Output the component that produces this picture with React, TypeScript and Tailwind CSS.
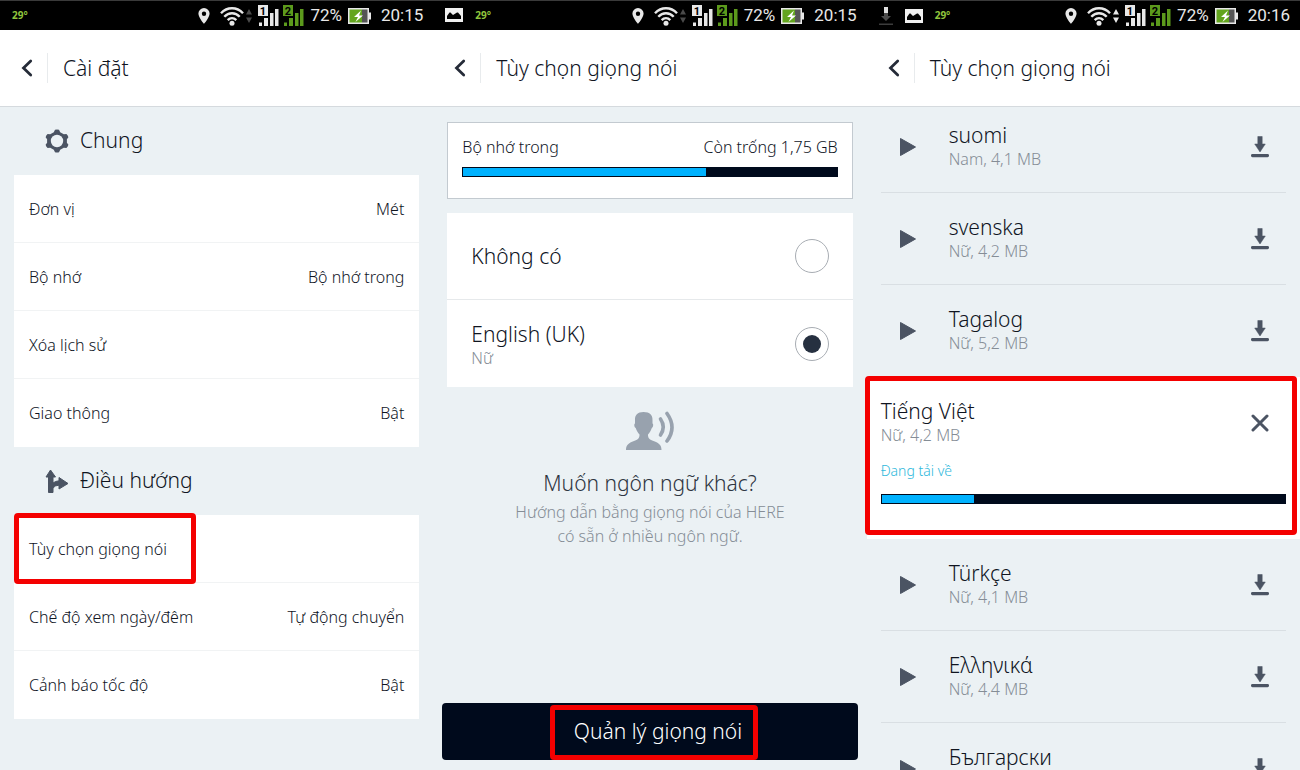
import { useState, type ReactNode } from "react";

const PinIcon = () => (
  <svg className="h-[18px] w-3" viewBox="0 0 12 18" fill="#e8e8e8" aria-hidden="true">
    <path
      fillRule="evenodd"
      d="M6 1a5.6 5.6 0 0 0-5.6 5.6C.4 10.6 6 17 6 17s5.600-6.400 5.600-10.400A5.600 5.600 0 0 0 6 1Zm0 3.500a2.200 2.200 0 1 1 0 4.400a2.200 2.200 0 0 1 0-4.400Z"
    />
  </svg>
);

const WifiIcon = () => (
  <svg className="h-5 w-6" viewBox="0 0 24 20" fill="none" stroke="#e8e8e8" strokeWidth="2.400" aria-hidden="true">
    <path d="M1 7.200C7.200.6 16.800.6 23 7.200" />
    <path d="M4.300 10.700c4.400-4.700 11-4.700 15.400 0" />
    <path d="M7.700 14.100c2.500-2.600 6.100-2.600 8.600 0" />
    <circle cx="12" cy="17.200" r="2.500" fill="#e8e8e8" stroke="none" />
  </svg>
);

const TrafficIcon = ({ active }: { active: boolean }) => (
  <svg className="h-4 w-1.5" viewBox="0 0 6 16" fill={active ? "#e8e8e8" : "#4a4a4a"} aria-hidden="true">
    <path d="M3 1l3 5.500H0ZM3 15l3-5.500H0Z" />
  </svg>
);

const SignalIcon = ({ sim, color }: { sim: string; color: string }) => (
  <svg className="h-[22px] w-[21px]" viewBox="0 0 21 22" fill={color} aria-hidden="true">
    <rect x="0" y="0" width="10" height="11" />
    <text x="5" y="9.500" fontSize="11" fontWeight="700" textAnchor="middle" fill="#000000" fontFamily="Roboto, sans-serif">
      {sim}
    </text>
    <rect x="1" y="17.500" width="3" height="3.500" />
    <rect x="6" y="13" width="4" height="8" />
    <rect x="12" y="8" width="3.500" height="13" />
    <rect x="17" y="4" width="3.500" height="17" />
  </svg>
);

const BatteryIcon = () => (
  <svg className="h-4 w-[23px]" viewBox="0 0 23 16" aria-hidden="true">
    <rect x="0" y="0" width="21" height="16" fill="#e8e8e8" />
    <rect x="21" y="4.500" width="2" height="7" fill="#e8e8e8" />
    <rect x="1.500" y="1.500" width="12.500" height="13" fill="#63a51e" />
    <rect x="14" y="1.500" width="5.500" height="13" fill="#555555" />
    <path d="M13 2.500L6 9h4l-2.500 5L15 7.500h-4Z" fill="#ffffff" />
  </svg>
);

const ImageIcon = () => (
  <svg className="h-[14px] w-[18px]" viewBox="0 0 18 14" aria-hidden="true">
    <rect width="18" height="14" fill="#f0f0f0" />
    <path d="M2 11V8l2.500-3.500h1L8 7l4-2.500h1L16 8v3Z" fill="#000000" />
  </svg>
);

const StatusDownloadIcon = () => (
  <svg className="h-[18px] w-[14px]" viewBox="0 0 14 18" aria-hidden="true">
    <path d="M5 0h4v6H5Z" fill="#e0e0e0" />
    <path d="M5 6h4v3h3l-5 5-5-5h3Z" fill="#4c4c4c" />
    <rect y="16.500" width="14" height="1.500" fill="#3c3c3c" />
  </svg>
);

const BackIcon = () => (
  <svg className="h-[18px] w-3" viewBox="0 0 12 18" fill="none" stroke="#252b38" strokeWidth="2.800" strokeLinecap="round" aria-hidden="true">
    <path d="M9.700 2L2.500 9l7.200 7" />
  </svg>
);

const GearIcon = () => (
  <svg className="h-6 w-6" viewBox="0 0 24 24" aria-hidden="true">
    <g fill="#4b5463">
      <path d="M10 .8Q12 .2 14 .8L15.200 3.300 18.800 5.200 21.400 5Q23 6.400 23.400 8.300L21.900 10.300V13.700L23.400 15.700Q23 17.600 21.400 19L18.800 18.800 15.200 20.700 14 23.200Q12 23.800 10 23.200L8.800 20.700 5.200 18.800 2.600 19Q1 17.600.6 15.700L2.100 13.700V10.300L.6 8.300Q1 6.400 2.600 5L5.200 5.200 8.800 3.300Z" />
    </g>
    <circle cx="12" cy="12" r="6.200" fill="#ebf1f4" />
  </svg>
);

const RouteIcon = () => (
  <svg className="h-6 w-6" viewBox="0 0 24 24" fill="#4b5463" stroke="#4b5463" strokeWidth="1" strokeLinejoin="round" aria-hidden="true">
    <path d="M5.500 1L10.500 8H8v6q2.500-2 6-2.200V8.500L23 14.500 14 20v-3.800Q10 16.200 8 19v4.500H3.500V8H1Z" />
  </svg>
);

const SpeakerIcon = () => (
  <svg className="h-10 w-12" viewBox="0 0 48 40" fill="#98a2ae" aria-hidden="true">
    <path d="M17.500 1c-6 0-8.800 3-8.500 8.500v3c-1 0-1 3.500.7 4.500 1 3 2.300 5 3.800 6.500.2 4-2 5.200-5.500 6.500C2.500 32 0 34 0 39h35.500c0-5-2.500-7-8-9-3.500-1.300-5.700-2.500-5.500-6.500 1.500-1.500 2.800-3.500 3.800-6.500 1.700-1 1.700-4.500.7-4.500v-3C26.800 4 24 1 17.500 1Z" />
    <path d="M34.500 8q5.500 8 0 16" fill="none" stroke="#98a2ae" strokeWidth="3.600" strokeLinecap="round" />
    <path d="M41 2.500q10 14 0 27.500" fill="none" stroke="#98a2ae" strokeWidth="3.600" strokeLinecap="round" />
  </svg>
);

const PlayIcon = () => (
  <svg className="h-5 w-[18px]" viewBox="0 0 18 20" fill="#4b5463" stroke="#4b5463" strokeWidth="1" strokeLinejoin="round" aria-hidden="true">
    <path d="M1.500 1.500L16.500 10 1.500 18.500Z" />
  </svg>
);

const DownloadIcon = () => (
  <svg className="h-[22px] w-[18px]" viewBox="0 0 18 22" fill="#4b5463" aria-hidden="true">
    <path d="M6.800.5h4.400V8h3.100L9 16 3.700 8h3.100Z" stroke="#4b5463" strokeWidth=".5" strokeLinejoin="round" />
    <rect x="0" y="18" width="18" height="3.200" rx="1.400" />
  </svg>
);

const CloseIcon = () => (
  <svg className="size-[18px]" viewBox="0 0 18 18" stroke="#4b5463" strokeWidth="3" strokeLinecap="round" aria-hidden="true">
    <path d="M2 2l14 14M16 2L2 16" />
  </svg>
);

type PhoneProps = {
  title: string;
  time: string;
  notices?: ReactNode;
  active?: boolean;
  children: ReactNode;
};

function Phone({ title, time, notices, active = false, children }: PhoneProps) {
  return (
    <section className="flex min-h-0 min-w-0 flex-col">
      <div className="flex h-[30px] shrink-0 items-center justify-between border-t border-[#3a3a3a] bg-black pr-2.5 pl-3 font-[Roboto,sans-serif] text-lg font-normal text-[#e8e8e8]">
        <div className="flex items-center gap-3">
          {notices}
          <span className="font-['Noto_Sans',sans-serif] text-[10px] font-bold text-[#8fc43c]">29°</span>
        </div>
        <div className="flex items-center">
          <PinIcon />
          <span className="ml-2.5 flex items-center gap-0.5">
            <WifiIcon />
            <TrafficIcon active={active} />
          </span>
          <span className="mr-1.5 ml-1.5 flex gap-1">
            <SignalIcon sim="1" color="#e8e8e8" />
            <SignalIcon sim="2" color="#5c9a1c" />
          </span>
          <span className="text-[17px]">72%</span>
          <span className="mr-2.5 ml-1.5">
            <BatteryIcon />
          </span>
          <span className="text-[17px]">{time}</span>
        </div>
      </div>
      <header className="flex h-[77px] shrink-0 items-center border-b border-[#d5dade] bg-white pl-[21px]">
        <button type="button" aria-label="Quay lại" className="mr-3.5">
          <BackIcon />
        </button>
        <h1 className="border-l border-[#e8ebed] pl-[15px] text-[21px] leading-[30px]">{title}</h1>
      </header>
      {children}
    </section>
  );
}

type Setting = { label: string; value?: string; marked?: boolean };

const general: Setting[] = [
  { label: "Đơn vị", value: "Mét" },
  { label: "Bộ nhớ", value: "Bộ nhớ trong" },
  { label: "Xóa lịch sử" },
  { label: "Giao thông", value: "Bật" },
];

const navigation: Setting[] = [
  { label: "Tùy chọn giọng nói", marked: true },
  { label: "Chế độ xem ngày/đêm", value: "Tự động chuyển" },
  { label: "Cảnh báo tốc độ", value: "Bật" },
];

function SettingsGroup({ icon, title, items }: { icon: ReactNode; title: string; items: Setting[] }) {
  return (
    <section>
      <h2 className="flex h-[68px] items-center gap-[11px] pl-[31px] text-[21px]">
        {icon}
        {title}
      </h2>
      <ul className="divide-y divide-[#f1f3f4] bg-white text-base font-[350]">
        {items.map((item) => (
          <li key={item.label} className="relative h-[68px]">
            <button type="button" className="flex h-full w-full items-center justify-between px-[15px]">
              <span>{item.label}</span>
              <span>{item.value}</span>
            </button>
            {item.marked && (
              <span className="pointer-events-none absolute -top-0.5 -bottom-0.5 left-0 w-[182px] rounded-sm border-5 border-[#f40000]" />
            )}
          </li>
        ))}
      </ul>
    </section>
  );
}

function ProgressBar({ value, label }: { value: number; label: string }) {
  return (
    <div
      role="progressbar"
      aria-label={label}
      aria-valuenow={value}
      aria-valuemin={0}
      aria-valuemax={100}
      className="h-2.5 border border-[#000a1c] bg-[#000a1c]"
    >
      <div className="h-full bg-[#00b2ff]" style={{ width: `${value}%` }} />
    </div>
  );
}

const voices = [
  { name: "Không có", detail: "" },
  { name: "English (UK)", detail: "Nữ" },
];

function VoiceOptions() {
  const [selected, setSelected] = useState("English (UK)");
  return (
    <main className="flex min-h-0 flex-1 flex-col pt-[15px]">
      <section className="mx-3.5 h-[77px] shrink-0 border border-[#c3cad0] bg-white px-3.5 pt-3">
        <div className="mb-2 flex justify-between text-base leading-6 font-[350]">
          <span>Bộ nhớ trong</span>
          <span>Còn trống 1,75 GB</span>
        </div>
        <ProgressBar value={65} label="Bộ nhớ trong" />
      </section>
      <div className="mx-3.5 mt-3.5 divide-y divide-[#e6e9eb] bg-white">
        {voices.map((voice) => (
          <label key={voice.name} className="flex h-[87px] items-center justify-between px-6">
            <span className="flex flex-col">
              <span className="text-[21px] leading-7">{voice.name}</span>
              {voice.detail && <span className="text-base leading-5 font-[350] text-[#858d96]">{voice.detail}</span>}
            </span>
            <input
              type="radio"
              name="voice"
              checked={selected === voice.name}
              onChange={() => setSelected(voice.name)}
              className="size-[34px] appearance-none rounded-full border border-[#a8adb3] bg-clip-content p-[7px] checked:bg-[#263040]"
            />
          </label>
        ))}
      </div>
      <section className="mt-6 flex flex-col items-center text-center">
        <SpeakerIcon />
        <h2 className="mt-[17px] text-[21px] leading-[30px] text-[#2e3541]">Muốn ngôn ngữ khác?</h2>
        <p className="mt-0.5 text-base leading-6 font-[350] text-[#858d96]">
          Hướng dẫn bằng giọng nói của HERE
          <br />
          có sẵn ở nhiều ngôn ngữ.
        </p>
      </section>
      <button type="button" className="relative mx-[9px] mt-auto mb-2.5 flex h-[57px] shrink-0 items-center justify-center rounded-sm bg-[#000a1c] text-[21px] text-white">
        <span className="pl-4">Quản lý giọng nói</span>
        <span className="pointer-events-none absolute top-0.5 bottom-0 left-[108px] w-[208px] rounded-sm border-5 border-[#f40000]" />
      </button>
    </main>
  );
}

type Pack = { name: string; detail: string; progress?: number };

const packs: Pack[] = [
  { name: "suomi", detail: "Nam, 4,1 MB" },
  { name: "svenska", detail: "Nữ, 4,2 MB" },
  { name: "Tagalog", detail: "Nữ, 5,2 MB" },
  { name: "Tiếng Việt", detail: "Nữ, 4,2 MB", progress: 23 },
  { name: "Türkçe", detail: "Nữ, 4,1 MB" },
  { name: "Ελληνικά", detail: "Nữ, 4,4 MB" },
  { name: "Български", detail: "" },
];

function PackText({ pack }: { pack: Pack }) {
  return (
    <div className="min-h-[52px] flex-1 pb-1">
      <h2 className="text-[21px] leading-7">{pack.name}</h2>
      <p className="text-base leading-5 font-[350] text-[#858d96]">{pack.detail}</p>
    </div>
  );
}

function PackRow({ pack }: { pack: Pack }) {
  if (pack.progress !== undefined) {
    return (
      <li className="relative h-[162px] bg-white px-3.5 pt-5">
        <div className="flex items-center pr-[17px]">
          <PackText pack={pack} />
          <button type="button" aria-label="Hủy">
            <CloseIcon />
          </button>
        </div>
        <p className="mt-3 mb-[13px] text-sm leading-5 font-[350] text-[#2fb9dc]">Đang tải về</p>
        <ProgressBar value={pack.progress} label={pack.name} />
        <span className="pointer-events-none absolute -top-px right-[3px] bottom-1 -left-0.5 rounded-sm border-5 border-[#f40000]" />
      </li>
    );
  }
  return (
    <li className="mx-3.5 flex h-[92px] items-center border-b border-[#d9dfe3] pr-[17px] pl-[18px]">
      <button type="button" aria-label="Nghe thử" className="mr-8">
        <PlayIcon />
      </button>
      <PackText pack={pack} />
      <button type="button" aria-label="Tải về">
        <DownloadIcon />
      </button>
    </li>
  );
}

export default function App() {
  return (
    <div className="grid h-screen grid-cols-3 grid-rows-[minmax(0,1fr)] overflow-hidden bg-[#ebf1f4] font-['Noto_Sans',sans-serif] font-light text-[#10151f]">
      <Phone title="Cài đặt" time="20:15">
        <main className="px-3.5">
          <SettingsGroup icon={<GearIcon />} title="Chung" items={general} />
          <SettingsGroup icon={<RouteIcon />} title="Điều hướng" items={navigation} />
        </main>
      </Phone>
      <Phone title="Tùy chọn giọng nói" time="20:15" notices={<ImageIcon />}>
        <VoiceOptions />
      </Phone>
      <Phone
        title="Tùy chọn giọng nói"
        time="20:16"
        active
        notices={
          <>
            <StatusDownloadIcon />
            <ImageIcon />
          </>
        }
      >
        <main className="min-h-0 flex-1 overflow-y-clip">
          <ul className="-mt-1.5">
            {packs.map((pack) => (
              <PackRow key={pack.name} pack={pack} />
            ))}
          </ul>
        </main>
      </Phone>
    </div>
  );
}
